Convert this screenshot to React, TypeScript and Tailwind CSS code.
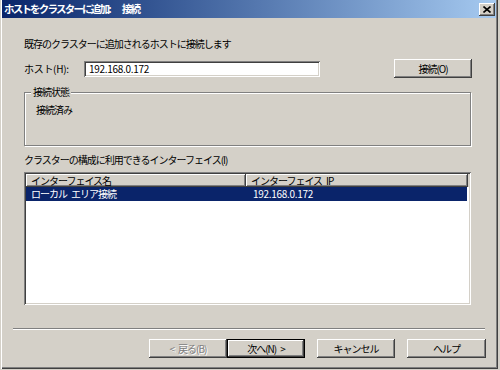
import React from 'react'

const raised =
  'shadow-[inset_-1px_-1px_0_#404040,inset_1px_1px_0_#ffffff,inset_-2px_-2px_0_#808080,inset_2px_2px_0_#d4d0c8]'
const sunken =
  'shadow-[inset_1px_1px_0_#808080,inset_-1px_-1px_0_#ffffff,inset_2px_2px_0_#404040,inset_-2px_-2px_0_#d4d0c8]'

function Sp() {
  return <span className="inline-block w-[4px]" />
}

function Btn({ children, disabled, def, w }: { children: React.ReactNode; disabled?: boolean; def?: boolean; w: string }) {
  return (
    <div className={`${w} h-[19px] ${def ? 'border border-black' : ''} bg-[#d4d0c8]`}>
      <div
        className={`w-full h-full flex items-center justify-center ${raised} ${
          disabled ? 'text-[#808080] [text-shadow:1px_1px_0_#ffffff]' : 'text-black'
        }`}
      >
        {children}
      </div>
    </div>
  )
}

export default function App() {
  return (
    <div className="w-[500px] h-[370px] bg-[#d4d0c8] font-['Noto_Sans_CJK_JP','Noto_Sans',sans-serif] text-[10px] leading-[12px] tracking-[-1px] text-black overflow-hidden">
      <div className="w-[498px] h-[369px] px-[2px] pb-[2px] flex flex-col shadow-[inset_1px_0_0_#d4d0c8,inset_2px_0_0_#ffffff,inset_-1px_-1px_0_#404040,inset_-2px_-2px_0_#808080]">
        {/* title bar */}
        <div className="h-[18px] flex items-center justify-between pl-[2px] pr-[1px] bg-gradient-to-r from-[#0a246a] to-[#a6caf0]">
          <span className="text-white font-bold text-[10.5px] tracking-[-1.8px]">
            ホストをクラスターに追加:<span className="inline-block w-[12px]" />接続
          </span>
          <div className={`w-[16px] h-[13px] bg-[#d4d0c8] flex items-center justify-center ${raised}`}>
            <svg width="8" height="7" viewBox="0 0 8 7">
              <path d="M0.5 0.5 L7.5 6.5 M7.5 0.5 L0.5 6.5" stroke="#000" strokeWidth="1.6" />
            </svg>
          </div>
        </div>

        {/* body */}
        <div className="flex-1 flex flex-col pl-[11px] pr-[11px]">
          <div className="flex flex-col pl-[11px] pr-[14px]">
            <div className="mt-[20px]">既存のクラスターに追加されるホストに接続します</div>

            <div className="mt-[9px] h-[19px] flex items-center">
              <span className="w-[60px] tracking-[-0.3px]">ホスト(H):</span>
              <div className={`w-[236px] h-[16px] bg-white flex items-center pl-[5px] tracking-[-0.3px] ${sunken}`}>
                192.168.0.172
              </div>
              <div className="flex-1" />
              <div className="mr-[-1px]">
                <Btn w="w-[78px]">接続(O)</Btn>
              </div>
            </div>

            <div className="mt-[14px] h-[54px] relative border border-[#808080] shadow-[inset_1px_1px_0_#ffffff,1px_1px_0_#ffffff] pt-[11px] pl-[11px]">
              <span className="absolute left-[6px] top-[-7px] bg-[#d4d0c8] px-[2px]">接続状態</span>
              接続済み
            </div>

            <div className="mt-[8px]">クラスターの構成に利用できるインターフェイス(I)</div>

            <div className={`mt-[6px] h-[133px] bg-white p-[2px] ${sunken}`}>
              <div className="flex h-[13px] bg-[#d4d0c8]">
                <div className={`w-[220px] h-full flex items-center pl-[5px] ${raised}`}>インターフェイス名</div>
                <div className={`w-[222px] h-full flex items-center pl-[5px] ${raised}`}>
                  インターフェイス<Sp />IP
                </div>
              </div>
              <div className="flex h-[14px] w-[441px] bg-[#0a246a] text-white items-center">
                <div className="w-[220px] pl-[5px]">
                  ローカル<Sp />エリア接続
                </div>
                <div className="pl-[7px] tracking-[-0.3px]">192.168.0.172</div>
              </div>
            </div>
          </div>

          <div className="mt-[23px] h-[2px] border-t border-t-[#808080] border-b border-b-white" />

          <div className="mt-[9px] flex justify-end mr-[-1px]">
            <Btn disabled w="w-[78px]">
              &lt;<Sp />戻る(B)
            </Btn>
            <Btn def w="w-[78px]">
              次へ(N)<Sp />&gt;
            </Btn>
            <div className="ml-[12px]">
              <Btn w="w-[78px]">キャンセル</Btn>
            </div>
            <div className="ml-[12px]">
              <Btn w="w-[79px]">ヘルプ</Btn>
            </div>
          </div>
        </div>
      </div>
    </div>
  )
}
